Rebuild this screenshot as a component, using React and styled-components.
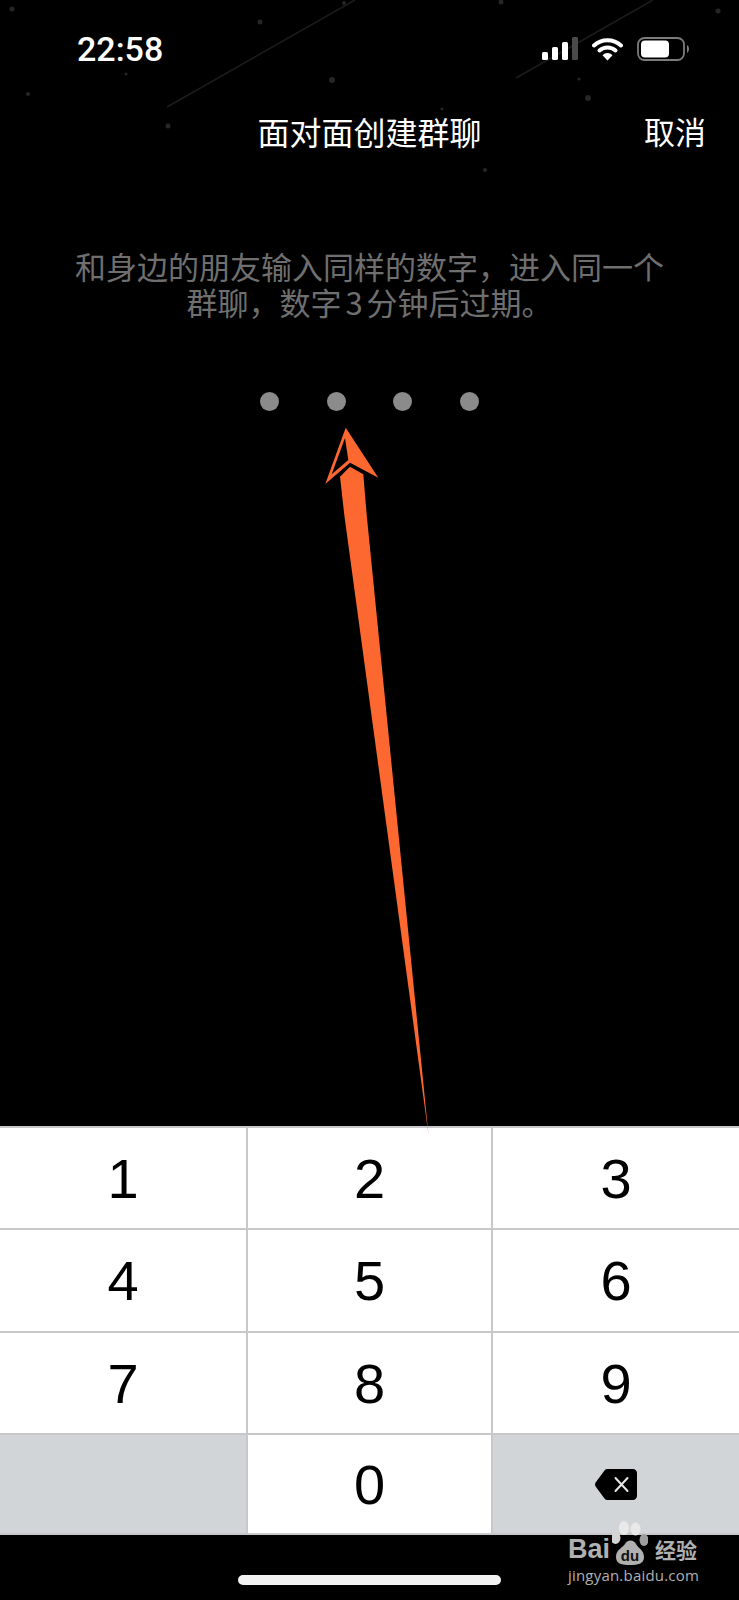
import React from 'react';
import styled, { createGlobalStyle } from 'styled-components';

const GlobalStyle = createGlobalStyle`
  html, body {
    margin: 0;
    padding: 0;
    background: #000;
  }
`;

const cjk = '"Noto Sans CJK SC", "Noto Sans", sans-serif';

const Screen = styled.div`
  position: relative;
  width: 739px;
  height: 1600px;
  overflow: hidden;
  display: flex;
  flex-direction: column;
  background: #000;
  font-family: ${cjk};
`;

const Overlay = styled.svg`
  position: absolute;
  top: 0;
  left: 0;
  pointer-events: none;
`;

const StatusBar = styled.div`
  height: 98px;
  flex: none;
  display: flex;
  align-items: center;
  justify-content: space-between;
  padding: 0 50px 0 77px;
  box-sizing: border-box;
  position: relative;
`;

const Time = styled.span`
  font-family: Roboto, sans-serif;
  font-weight: 500;
  font-size: 34px;
  line-height: 40px;
  color: #fff;
`;

const StatusIcons = styled.div`
  display: flex;
  align-items: center;
  gap: 14px;
`;

const NavBar = styled.div`
  height: 66px;
  flex: none;
  display: grid;
  grid-template-columns: 1fr auto 1fr;
  align-items: center;
  padding-right: 33px;
  padding-left: 33px;
  position: relative;
`;

const Title = styled.div`
  grid-column: 2;
  font-size: 32px;
  font-weight: 400;
  line-height: 44px;
  color: #fff;
`;

const Cancel = styled.div`
  grid-column: 3;
  justify-self: end;
  font-size: 31px;
  line-height: 44px;
  color: #fff;
`;

const Hint = styled.p`
  margin: 84px 0 0;
  text-align: center;
  font-size: 31px;
  line-height: 36px;
  word-spacing: -3px;
  color: #6f6f6f;
  position: relative;
`;

const Dots = styled.div`
  margin-top: 72px;
  display: flex;
  justify-content: center;
  gap: 47.4px;
`;

const Dot = styled.span`
  width: 19px;
  height: 19px;
  border-radius: 50%;
  background: #8b8b8b;
`;

const Spacer = styled.div`
  flex: 1;
`;

const Keypad = styled.div`
  flex: none;
  display: grid;
  grid-template-columns: 246px 243px 246px;
  grid-template-rows: 100px 101px 100px 98px;
  gap: 2px;
  padding: 2px 0;
  background: #c8c8ca;
`;

const Key = styled.div`
  display: flex;
  align-items: center;
  justify-content: center;
  background: ${props => (props.$muted ? '#d2d5d8' : '#fff')};
  font-family: "Liberation Sans", Arial, sans-serif;
  font-size: 56px;
  color: #000;
`;

const HomeArea = styled.div`
  height: 65px;
  flex: none;
  display: flex;
  justify-content: center;
  padding-top: 40px;
  box-sizing: border-box;
`;

const HomeBar = styled.div`
  width: 263px;
  height: 10px;
  border-radius: 5px;
  background: #f2f2f2;
`;

const Watermark = styled.div`
  position: absolute;
  left: 568px;
  top: 1524px;
  width: 135px;
  height: 62px;
  color: #b0b0b0;
`;

const WatermarkTop = styled.div`
  display: flex;
  align-items: center;
  height: 38px;
`;

const BaiText = styled.span`
  font-family: "Liberation Sans", Arial, sans-serif;
  font-weight: 700;
  font-size: 27px;
  line-height: 38px;
  padding-top: 12px;
  width: 44px;
`;

const JingYan = styled.span`
  font-size: 21px;
  font-weight: 700;
  line-height: 38px;
  padding-top: 12px;
  margin-left: 7px;
`;

const WatermarkUrl = styled.div`
  font-family: "Open Sans", sans-serif;
  font-size: 15px;
  line-height: 20px;
  margin-top: 3px;
  letter-spacing: 0.2px;
  white-space: nowrap;
`;

const stars = [
  [12, 9, 2.5], [260, 22, 2.5], [501, 2, 2.5], [718, 11, 2.5], [28, 94, 2],
  [332, 80, 3], [588, 98, 3], [168, 126, 2.5], [485, 170, 2], [126, 74, 1.5],
  [579, 79, 1.5], [442, 109, 1.5], [344, 3, 2],
];

function SignalIcon() {
  return (
    <svg width="36" height="24" viewBox="0 0 36 24">
      <rect x="0" y="15" width="6" height="8" rx="1.5" fill="#fff" />
      <rect x="10" y="10" width="6" height="13" rx="1.5" fill="#fff" />
      <rect x="20" y="5" width="6" height="18" rx="1.5" fill="#fff" />
      <rect x="30" y="0" width="6" height="23" rx="1.5" fill="#4a4a4a" />
    </svg>
  );
}

function WifiIcon() {
  return (
    <svg width="31" height="24" viewBox="0 0 31 24" fill="none">
      <path d="M2 8.5C9.5 1.5 21.5 1.5 29 8.5" stroke="#fff" strokeWidth="4" strokeLinecap="round" />
      <path d="M7.5 13.5C12 9.5 19 9.5 23.5 13.5" stroke="#fff" strokeWidth="4" strokeLinecap="round" />
      <path d="M10.5 18.2C13.5 15.4 17.5 15.4 20.5 18.2L15.5 23.5Z" fill="#fff" />
    </svg>
  );
}

function BatteryIcon() {
  return (
    <svg width="52" height="24" viewBox="0 0 52 24" fill="none">
      <rect x="1" y="1" width="46" height="22" rx="6.5" stroke="#7c7c7c" strokeWidth="1.8" />
      <rect x="4" y="3.5" width="28" height="17" rx="4" fill="#fff" />
      <path d="M50 8C51.3 8.8 52 10.2 52 12C52 13.8 51.3 15.2 50 16Z" fill="#7c7c7c" />
    </svg>
  );
}

function BackspaceIcon() {
  return (
    <svg width="42" height="31" viewBox="0 0 42 31">
      <path d="M12.5 0H38C40.2 0 42 1.8 42 4V27C42 29.2 40.2 31 38 31H12.5C11.4 31 10.4 30.5 9.7 29.7L0.8 17.8C-0.2 16.5 -0.2 14.5 0.8 13.2L9.7 1.3C10.4 0.5 11.4 0 12.5 0Z" fill="#000" />
      <path d="M20.5 9L32.5 22M32.5 9L20.5 22" stroke="#e6e6e6" strokeWidth="2" strokeLinecap="round" />
    </svg>
  );
}

function PawIcon() {
  return (
    <svg width="36" height="48" viewBox="0 0 36 48" style={{ flex: 'none' }}>
      <ellipse cx="12" cy="9" rx="5" ry="7" fill="#e9e9e9" />
      <ellipse cx="23.5" cy="10" rx="5" ry="6.5" fill="#e9e9e9" />
      <ellipse cx="3.5" cy="19" rx="5" ry="6" fill="#d4d4d4" />
      <ellipse cx="32" cy="21" rx="4.5" ry="6" fill="#9e9e9e" />
      <path d="M4 38C4 31 10 29 13 25C16 20 22 21 24 25C27 30 32 31 32 38C32 45 26 46 18 46C10 46 4 45 4 38Z" fill="#b0b0b0" />
      <text x="18" y="42" textAnchor="middle" fontFamily="Liberation Sans, Arial, sans-serif" fontWeight="700" fontSize="15" fill="#111">du</text>
    </svg>
  );
}

const keys = ['1', '2', '3', '4', '5', '6', '7', '8', '9'];

// full-width comma, written as an escape so it can't get normalised to ascii
const comma = '\uFF0C';

export default function App() {
  return (
    <Screen>
      <GlobalStyle />
      {/* faint starry backdrop behind the header */}
      <Overlay width="739" height="200" viewBox="0 0 739 200">
        {stars.map(([x, y, r]) => (
          <circle key={`${x}-${y}`} cx={x} cy={y} r={r} fill="#262626" />
        ))}
        <path d="M167 107L355 0" stroke="#1c1c1c" strokeWidth="1.5" />
        <path d="M516 78L653 0" stroke="#1c1c1c" strokeWidth="1.5" />
      </Overlay>

      <StatusBar>
        <Time>22:58</Time>
        <StatusIcons>
          <SignalIcon />
          <WifiIcon />
          <BatteryIcon />
        </StatusIcons>
      </StatusBar>

      <NavBar>
        <Title>面对面创建群聊</Title>
        <Cancel>取消</Cancel>
      </NavBar>

      <Hint>
        {`和身边的朋友输入同样的数字${comma}进入同一个`}
        <br />
        {`群聊${comma}数字 3 分钟后过期。`}
      </Hint>

      <Dots>
        <Dot />
        <Dot />
        <Dot />
        <Dot />
      </Dots>

      <Spacer />

      <Keypad>
        {keys.map(k => (
          <Key key={k}>{k}</Key>
        ))}
        <Key $muted />
        <Key>0</Key>
        <Key $muted>
          <BackspaceIcon />
        </Key>
      </Keypad>

      <HomeArea>
        <HomeBar />
      </HomeArea>

      {/* annotation arrow drawn over the page */}
      <Overlay width="739" height="1600" viewBox="0 0 739 1600">
        <path d="M345.7 427.7L378.3 477.7L350 462.7L325.3 484Z" fill="#fd6730" />
        <path d="M345 438L331.7 474.3L348.3 460Z" fill="#000" />
        <path d="M340 476.7L350 466.7L363.3 474.3L366.7 515L428.5 1135L344.3 515Z" fill="#fd6730" />
      </Overlay>

      <Watermark>
        <WatermarkTop>
          <BaiText>Bai</BaiText>
          <PawIcon />
          <JingYan>经验</JingYan>
        </WatermarkTop>
        <WatermarkUrl>jingyan.baidu.com</WatermarkUrl>
      </Watermark>
    </Screen>
  );
}
